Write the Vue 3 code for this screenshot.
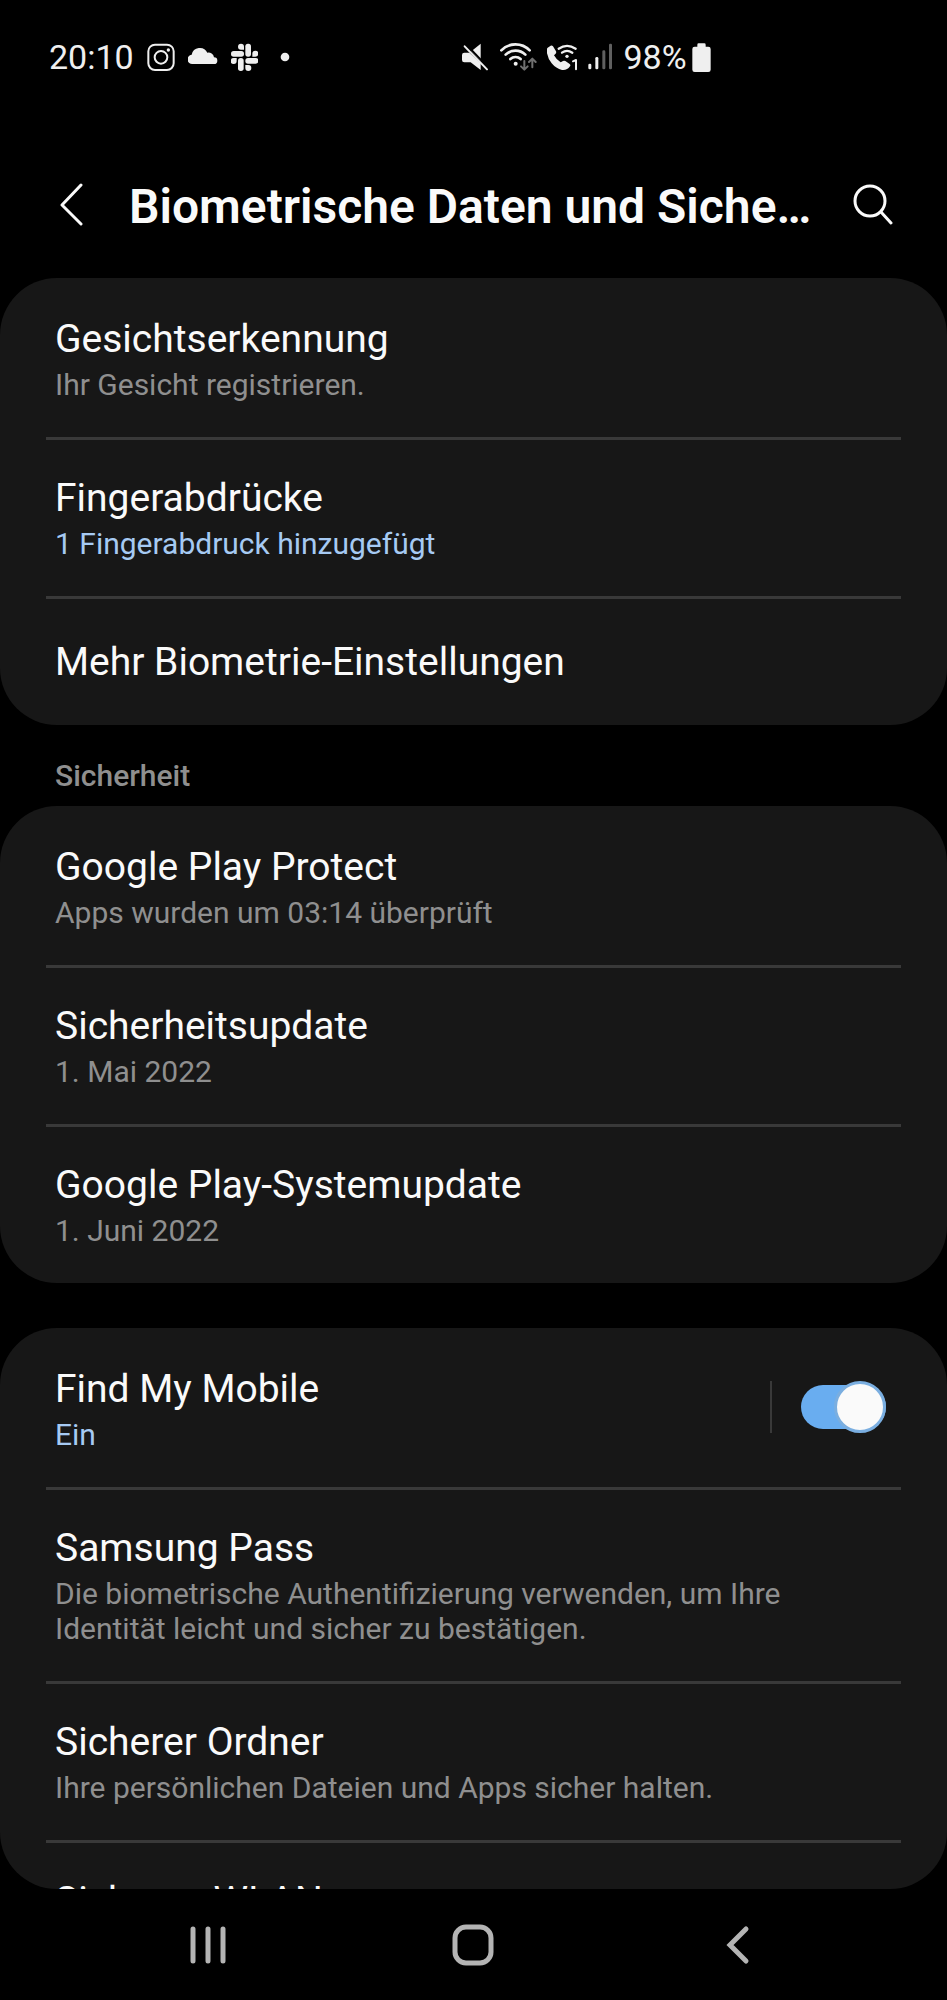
<script setup>
import { ref } from 'vue'

const findMyMobile = ref(true)

const groups = [
  {
    id: 'biometrics',
    items: [
      { title: 'Gesichtserkennung', summary: 'Ihr Gesicht registrieren.' },
      { title: 'Fingerabdrücke', summary: '1 Fingerabdruck hinzugefügt', accent: true },
      { title: 'Mehr Biometrie-Einstellungen', single: true }
    ]
  },
  {
    id: 'security',
    heading: 'Sicherheit',
    items: [
      { title: 'Google Play Protect', summary: 'Apps wurden um 03:14 überprüft' },
      { title: 'Sicherheitsupdate', summary: '1. Mai 2022' },
      { title: 'Google Play-Systemupdate', summary: '1. Juni 2022' }
    ]
  },
  {
    id: 'services',
    spaced: true,
    items: [
      { title: 'Find My Mobile', summary: 'Ein', accent: true, toggle: true },
      {
        title: 'Samsung Pass',
        summary: 'Die biometrische Authentifizierung verwenden, um Ihre Identität leicht und sicher zu bestätigen.'
      },
      { title: 'Sicherer Ordner', summary: 'Ihre persönlichen Dateien und Apps sicher halten.' },
      { title: 'Sicheres WLAN' }
    ]
  }
]
</script>

<template>
  <div class="screen">
    <div class="status">
      <div class="status-left">
        <span class="status-text">20:10</span>
        <svg width="28" height="32" viewBox="353 63 84 96" fill="none" stroke="#efefef" aria-hidden="true">
          <rect x="357" y="74" width="76" height="76" rx="20" stroke-width="6" />
          <circle cx="395" cy="112" r="19" stroke-width="6" />
          <circle cx="417" cy="90" r="5" fill="#efefef" stroke="none" />
        </svg>
        <svg width="30" height="32" viewBox="474 63 90 96" fill="#efefef" aria-hidden="true">
          <path d="M488 132a14 14 0 0 1-3-28a25 25 0 0 1 47-6a17 17 0 0 1 20 14a10 10 0 0 1 0 20z" />
        </svg>
        <svg width="27" height="32" viewBox="602 63 81 96" fill="#efefef" aria-hidden="true">
          <path d="M632 71a9 9 0 0 1 9 9v9h-9a9 9 0 0 1 0-18z" />
          <rect x="602" y="93" width="39" height="17" rx="8" />
          <rect x="645" y="71" width="17" height="39" rx="8" />
          <path d="M666 110v-9a9 9 0 1 1 9 9z" />
          <rect x="645" y="114" width="39" height="17" rx="8" />
          <path d="M645 135h9a9 9 0 1 1-9 9z" />
          <rect x="623" y="114" width="17" height="39" rx="8" />
          <path d="M619 114v9a9 9 0 1 1-9-9z" />
        </svg>
        <svg width="28" height="32" viewBox="723 63 84 96" fill="#efefef" aria-hidden="true">
          <circle cx="765" cy="111" r="13" />
        </svg>
      </div>
      <div class="status-right">
        <svg width="28" height="32" viewBox="66 63 84 96" fill="#efefef" aria-hidden="true">
          <path d="M66 105q0-7 7-7h15l34 32v20l-30-23h-19q-7 0-7-7z" />
          <path d="M94 94l28-23v52z" />
          <path d="M80 75l68 71" stroke="#000" stroke-width="6" />
          <path d="M74 79l67 69" stroke="#efefef" stroke-width="6" stroke-linecap="round" />
        </svg>
        <svg width="37" height="32" viewBox="180 63 111 96" fill="none" stroke-linecap="round" stroke-linejoin="round" aria-hidden="true">
          <g stroke="#efefef" stroke-width="8">
            <path d="M184 91a59 59 0 0 1 85 0" />
            <path d="M197 104a42 42 0 0 1 59 0" />
            <path d="M211 117a23 23 0 0 1 31 0" />
          </g>
          <circle cx="227" cy="131" r="6" fill="#efefef" />
          <g stroke="#707070" stroke-width="6">
            <path d="M253 123v25M243 139l10 10 10-10" />
            <path d="M277 142v-25M267 126l10-10 10 10" />
          </g>
        </svg>
        <svg width="31" height="32" viewBox="320 63 93 96" fill="none" stroke-linecap="round" aria-hidden="true">
          <path
            fill="#efefef"
            d="M322 83l9-6q4-2 7 2l9 15q2 5-2 8l-4 4q7 13 20 21l7-4q3-2 7 0l12 8q5 3 2 8q-9 13-24 11q-18-4-31-20t-15-37q0-7 3-10z"
          />
          <g stroke="#efefef" stroke-width="7">
            <path d="M355 86q25-17 51 0" />
            <path d="M365 98q15-11 31 0" />
          </g>
          <circle cx="380" cy="109" r="5" fill="#efefef" />
          <path d="M398 124l9-4v28" stroke="#efefef" stroke-width="6" stroke-linejoin="round" />
        </svg>
        <svg width="24" height="32" viewBox="440 63 72 96" aria-hidden="true">
          <rect x="441" y="131" width="9" height="17" rx="4" fill="#efefef" />
          <rect x="462" y="111" width="9" height="37" rx="4" fill="#efefef" />
          <rect x="483" y="91" width="9" height="57" rx="4" fill="#606060" />
          <rect x="503" y="71" width="9" height="77" rx="4" fill="#606060" />
        </svg>
        <div class="battery">
          <span class="status-text">98%</span>
          <svg width="19" height="32" viewBox="757 63 57 96" fill="#efefef" aria-hidden="true">
            <path d="M773 80v-6q0-4 4-4h17q4 0 4 4v6h8q7 0 7 7v62q0 7-7 7h-41q-7 0-7-7v-62q0-7 7-7z" />
          </svg>
        </div>
      </div>
    </div>

    <header class="appbar">
      <button class="icon-button" type="button" aria-label="Zurück">
        <svg width="24" height="44" viewBox="0 0 24 44" fill="none" stroke="#fafafa" stroke-width="3" stroke-linecap="round" stroke-linejoin="round" aria-hidden="true">
          <path d="M22 2L3 22l19 19" />
        </svg>
      </button>
      <h1 class="heading">Biometrische Daten und Sicherheit</h1>
      <button class="icon-button" type="button" aria-label="Suchen">
        <svg width="40" height="42" viewBox="0 0 40 42" fill="none" stroke="#fafafa" stroke-width="3" stroke-linecap="round" aria-hidden="true">
          <circle cx="17" cy="17" r="15" />
          <path d="M28 28l10 11" />
        </svg>
      </button>
    </header>

    <main class="content">
      <section v-for="group in groups" :key="group.id" :class="{ spaced: group.spaced }">
        <h2 v-if="group.heading" class="subheading">{{ group.heading }}</h2>
        <ul class="card">
          <li v-for="item in group.items" :key="item.title" class="row" :class="{ single: item.single }">
            <a class="row-link" href="#">
              <span class="title">{{ item.title }}</span>
              <span v-if="item.summary" class="summary" :class="{ accent: item.accent }">{{ item.summary }}</span>
            </a>
            <label v-if="item.toggle" class="toggle">
              <input v-model="findMyMobile" class="toggle-input" type="checkbox" role="switch" :aria-label="item.title" />
              <span class="toggle-thumb"></span>
            </label>
          </li>
        </ul>
      </section>
    </main>

    <nav class="navbar">
      <button class="nav-button" type="button" aria-label="Letzte Apps">
        <svg width="40" height="42" viewBox="0 0 40 42" stroke="#b4b4b4" stroke-width="5" stroke-linecap="round" aria-hidden="true">
          <path d="M5 5v32M20 5v32M35 5v32" />
        </svg>
      </button>
      <button class="nav-button" type="button" aria-label="Startbildschirm">
        <svg width="42" height="42" viewBox="0 0 42 42" fill="none" stroke="#b4b4b4" stroke-width="5" aria-hidden="true">
          <rect x="3" y="3" width="36" height="36" rx="11" />
        </svg>
      </button>
      <button class="nav-button" type="button" aria-label="Zurück">
        <svg width="26" height="42" viewBox="0 0 26 42" fill="none" stroke="#b4b4b4" stroke-width="5" stroke-linecap="round" aria-hidden="true">
          <path d="M20 5L4 21l16 16" />
        </svg>
      </button>
    </nav>
  </div>
</template>

<style>
body {
  margin: 0;
  background: #000;
}
</style>

<style scoped>
.screen {
  display: flex;
  flex-direction: column;
  height: 100vh;
  background: #000;
  color: #fafafa;
  font-family: Roboto, "Liberation Sans", sans-serif;
}

svg {
  display: block;
  flex: none;
}

button {
  border: 0;
  padding: 0;
  background: none;
  cursor: pointer;
}

.status {
  display: flex;
  align-items: center;
  flex: none;
  height: 114px;
}

.status-left {
  display: flex;
  align-items: center;
  gap: 13px;
  box-sizing: border-box;
  flex: 0 0 calc(50% - 12px);
  padding-left: 49px;
}

.status-right {
  display: flex;
  align-items: center;
  gap: 10px;
}

.battery {
  display: flex;
  align-items: center;
  gap: 5px;
  padding-left: 2px;
}

.status-text {
  font-size: 34px;
  line-height: 40px;
  color: #efefef;
}

.appbar {
  display: flex;
  align-items: flex-start;
  flex: none;
  padding: 65px 46px 43px 43px;
}

.icon-button {
  display: flex;
  align-items: center;
  justify-content: center;
  flex: none;
  width: 56px;
  height: 52px;
}

.heading {
  flex: 1;
  min-width: 0;
  margin: 0 22px 0 30px;
  font-size: 48px;
  line-height: 56px;
  font-weight: 600;
  white-space: nowrap;
  overflow: hidden;
  text-overflow: ellipsis;
}

.content {
  flex: 1;
  min-height: 0;
  overflow-y: auto;
  scrollbar-width: none;
  border-radius: 0 0 57px 57px;
}

.spaced {
  margin-top: 45px;
}

.subheading {
  margin: 0;
  padding: 33px 55px 13px;
  font-size: 30px;
  line-height: 35px;
  font-weight: 500;
  color: #8f8f8f;
}

.card {
  margin: 0;
  padding: 0 46px;
  list-style: none;
  border-radius: 57px;
  background: #171717;
}

.row {
  display: flex;
  align-items: center;
  border-top: 3px solid #393939;
}

.row:first-child {
  border-top-color: transparent;
}

.row-link {
  display: flex;
  flex-direction: column;
  gap: 4px;
  flex: 1;
  min-width: 0;
  padding: 34px 9px 35px;
  color: inherit;
  text-decoration: none;
}

.single .row-link {
  padding: 39px 9px;
}

.title {
  font-size: 39px;
  line-height: 48px;
}

.summary {
  max-width: 760px;
  font-size: 30px;
  line-height: 35px;
  color: #8f8f8f;
}

.accent {
  color: #a6caf3;
}

.toggle {
  position: relative;
  display: flex;
  align-items: center;
  flex: none;
  height: 52px;
  margin: 0 15px 4px 0;
  padding-left: 29px;
  border-left: 2px solid #393939;
}

.toggle-input {
  appearance: none;
  width: 85px;
  height: 44px;
  margin: 0;
  border-radius: 22px;
  background: #5a5a5a;
}

.toggle-input:checked {
  background: #69adf0;
}

.toggle-thumb {
  position: absolute;
  top: 0;
  right: 34px;
  box-sizing: border-box;
  width: 52px;
  height: 52px;
  border: 3px solid #7aaee0;
  border-radius: 50%;
  background: #fafafa;
  pointer-events: none;
}

.toggle-input:checked + .toggle-thumb {
  right: 0;
}

.navbar {
  display: grid;
  grid-template-columns: repeat(3, 1fr);
  flex: none;
  height: 111px;
  padding: 0 8%;
}

.nav-button {
  display: flex;
  align-items: center;
  justify-content: center;
}
</style>
